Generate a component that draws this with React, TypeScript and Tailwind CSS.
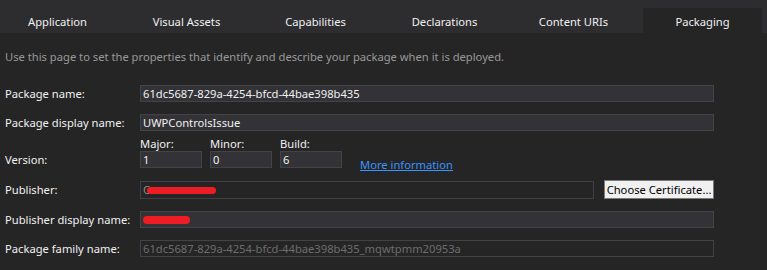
import React from "react";

const font = { fontFamily: '"Noto Sans", "Open Sans", sans-serif' };

const tabs = ["Application", "Visual Assets", "Capabilities", "Declarations", "Content URIs", "Packaging"];

function Field({ children, className = "" }: { children?: React.ReactNode; className?: string }) {
  return (
    <div
      className={
        "h-[17px] border border-[#434346] bg-[#333337] flex items-center pl-[2px] text-[11.2px] text-[#f1f1f1] leading-none overflow-hidden whitespace-nowrap " +
        className
      }
    >
      {children}
    </div>
  );
}

function Label({ children }: { children: React.ReactNode }) {
  return <div className="w-[135px] shrink-0 text-[11.2px] text-[#f1f1f1] leading-none">{children}</div>;
}

export default function App() {
  return (
    <div className="w-[767px] h-[270px] bg-[#252526] overflow-hidden" style={font}>
      <div className="h-[33px] bg-[#2d2d30] flex items-end -ml-[2px] gap-[10px]">
        {tabs.map((t) => (
          <div
            key={t}
            className={
              "w-[119px] shrink-0 h-[25px] flex items-center justify-center pt-[3px] text-[11.2px] text-[#f1f1f1] " +
              (t === "Packaging" ? "bg-[#252526]" : "")
            }
          >
            {t}
          </div>
        ))}
      </div>
      <div className="pl-[5px]">
        <div className="mt-[17px] text-[11.2px] leading-[14px] text-[#999999]">
          Use this page to set the properties that identify and describe your package when it is deployed.
        </div>
        <div className="mt-[21px] flex items-center">
          <Label>Package name:</Label>
          <Field className="w-[574px]">61dc5687-829a-4254-bfcd-44bae398b435</Field>
        </div>
        <div className="mt-[12px] flex items-center">
          <Label>Package display name:</Label>
          <Field className="w-[574px]">UWPControlsIssue</Field>
        </div>
        <div className="mt-[6px] flex items-end">
          <div className="w-[135px] shrink-0 text-[11.2px] text-[#f1f1f1] leading-none pb-[3px]">Version:</div>
          <div className="flex gap-[8px]">
            {[
              ["Major:", "1"],
              ["Minor:", "0"],
              ["Build:", "6"],
            ].map(([l, v]) => (
              <div key={l} className="flex flex-col">
                <div className="h-[14px] text-[11.2px] leading-[14px] text-[#f1f1f1]">{l}</div>
                <Field className="w-[62px]">{v}</Field>
              </div>
            ))}
          </div>
          <a className="ml-[18px] text-[11.2px] leading-none text-[#3794ff] underline -mb-[2px]" href="#">
            More information
          </a>
        </div>
        <div className="mt-[12px] flex items-center">
          <Label>Publisher:</Label>
          <div className="relative w-[454px] h-[18px] border border-[#3f3f46] bg-[#252526]">
            <span className="absolute left-[2px] top-[1px] text-[11.2px] leading-[14px] text-[#8a8a8a]">C</span>
            <div className="absolute left-[6px] top-[5px] w-[69px] h-[7px] rounded-full bg-[#ee1c24]" />
          </div>
          <button className="ml-[10px] w-[110px] h-[19px] bg-[#f0f0f0] border border-[#7a7a7a] text-[11.2px] leading-none text-black flex items-center justify-center whitespace-nowrap">
            Choose Certificate...
          </button>
        </div>
        <div className="mt-[12px] flex items-center">
          <Label>Publisher display name:</Label>
          <div className="relative w-[574px] h-[17px] border border-[#434346] bg-[#333337]">
            <div className="absolute left-[2px] top-[4px] w-[47px] h-[8px] rounded-full bg-[#ee1c24]" />
          </div>
        </div>
        <div className="mt-[12px] flex items-center">
          <Label>Package family name:</Label>
          <div className="w-[574px] h-[17px] border border-[#434346] bg-[#252526] flex items-center pl-[2px] text-[11.2px] leading-none text-[#6d6d6d] whitespace-nowrap">
            61dc5687-829a-4254-bfcd-44bae398b435_mqwtpmm20953a
          </div>
        </div>
      </div>
    </div>
  );
}
